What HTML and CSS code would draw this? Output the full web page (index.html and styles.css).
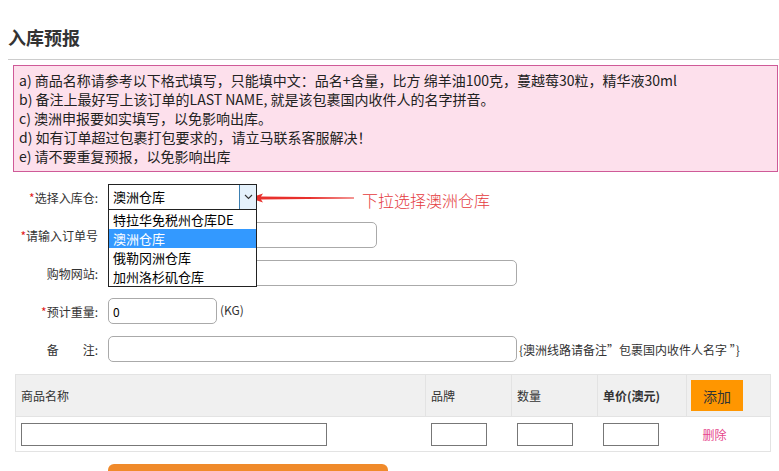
FILE: index.html
```html
<!DOCTYPE html>
<html lang="zh-CN">
<head>
    <meta charset="UTF-8">
    <title>入库预报</title>
    <link rel="stylesheet" href="styles.css">
</head>
<body>
    <div class="page">
        <h1 class="title">入库预报</h1>

        <div class="notice">
            <p>a) 商品名称请参考以下格式填写，只能填中文：品名+含量，比方 绵羊油100克，蔓越莓30粒，精华液30ml</p>
            <p>b) 备注上最好写上该订单的LAST NAME, 就是该包裹国内收件人的名字拼音。</p>
            <p>c) 澳洲申报要如实填写，以免影响出库。</p>
            <p>d) 如有订单超过包裹打包要求的，请立马联系客服解决！</p>
            <p>e) 请不要重复预报，以免影响出库</p>
        </div>

        <div class="form">
            <div class="row">
                <label class="label"><span class="req">*</span>选择入库仓:</label>
                <div class="select-wrap">
                    <div class="select">
                        <span class="select-text">澳洲仓库</span>
                        <span class="select-btn">
                            <svg width="9" height="6" viewBox="0 0 9 6"><path d="M1 1 L4.5 4.5 L8 1" fill="none" stroke="#333" stroke-width="1.1"/></svg>
                        </span>
                    </div>
                    <ul class="dropdown">
                        <li>特拉华免税州仓库DE</li>
                        <li class="active">澳洲仓库</li>
                        <li>俄勒冈洲仓库</li>
                        <li>加州洛杉矶仓库</li>
                    </ul>
                </div>
                <svg class="hint-arrow" width="104" height="10" viewBox="0 0 104 10">
                    <polygon points="0,5 13,0.5 11,3.6 104,4.6 104,5.4 11,6.4 13,9.5" fill="#e8302c"/>
                </svg>
                <span class="hint">下拉选择澳洲仓库</span>
            </div>

            <div class="row">
                <label class="label"><span class="req">*</span>请输入订单号</label>
                <input class="input w-md" type="text">
            </div>

            <div class="row">
                <label class="label">购物网站:</label>
                <input class="input w-lg" type="text">
            </div>

            <div class="row">
                <label class="label"><span class="req">*</span>预计重量:</label>
                <input class="input w-sm" type="text" value="0">
                <span class="unit">(KG)</span>
            </div>

            <div class="row">
                <label class="label">备　　注:</label>
                <input class="input w-lg" type="text">
                <span class="note">{澳洲线路请备注”包裹国内收件人名字 ”}</span>
            </div>
        </div>

        <table class="goods">
            <thead>
                <tr>
                    <th class="c-name">商品名称</th>
                    <th class="c-brand">品牌</th>
                    <th class="c-qty">数量</th>
                    <th class="c-price"><b>单价(澳元)</b></th>
                    <th class="c-op"><button class="btn-add">添加</button></th>
                </tr>
            </thead>
            <tbody>
                <tr>
                    <td><input class="cell-input name" type="text"></td>
                    <td><input class="cell-input" type="text"></td>
                    <td><input class="cell-input" type="text"></td>
                    <td><input class="cell-input" type="text"></td>
                    <td class="c-op"><a class="del" href="#">删除</a></td>
                </tr>
            </tbody>
        </table>

        <button class="submit" title="提交预报"></button>
    </div>
</body>
</html>
```

FILE: styles.css
```css
body {
    margin: 0;
    background-color: #fff;
    font-family: "Noto Sans CJK SC", "Microsoft YaHei", sans-serif;
    color: #333;
    overflow: hidden;
}
.page {
    padding-left: 8px;
}
.title {
    margin: 25px 0 0;
    padding-bottom: 10px;
    font-size: 18px;
    line-height: 24px;
    font-weight: bold;
    color: #333;
    border-bottom: 1px solid #ccc;
}
.notice {
    margin: 5px 1px 0 5px;
    padding: 5px 5px;
    background-color: #fde0ec;
    border: 1px solid #cf5a98;
}
.notice p {
    margin: 0;
    font-size: 14px;
    line-height: 19px;
    color: #222;
}
.form {
    margin-top: 12px;
    display: flex;
    flex-direction: column;
    gap: 12px;
}
.row {
    display: flex;
    align-items: center;
    height: 26px;
}
.label {
    width: 90px;
    margin-right: 10px;
    text-align: right;
    font-size: 12px;
    color: #333;
}
.req {
    color: #e21b1b;
}
.select-wrap {
    position: relative;
}
.select {
    display: flex;
    width: 149px;
    height: 26px;
    box-sizing: border-box;
    border: 1px solid #222;
    background: #fff;
}
.select-text {
    flex: 1;
    padding-left: 4px;
    font-size: 13px;
    line-height: 24px;
    color: #000;
}
.select-btn {
    width: 16px;
    display: flex;
    align-items: center;
    justify-content: center;
    background: #e5f1fb;
    border-left: 1px solid #3c7fb1;
}
.dropdown {
    position: absolute;
    top: 26px;
    left: 0;
    z-index: 5;
    width: 149px;
    box-sizing: border-box;
    margin: 0;
    padding: 0;
    list-style: none;
    background: #fff;
    border: 1px solid #222;
    border-top: none;
}
.dropdown li {
    padding-left: 4px;
    font-size: 13px;
    line-height: 19px;
    color: #000;
}
.dropdown li.active {
    background: #3399ff;
    color: #fff;
}
.hint-arrow {
    margin-left: -7px;
    margin-top: 2px;
}
.hint {
    margin-left: 8px;
    padding-top: 5px;
    font-size: 16px;
    font-weight: 300;
    color: #e4393c;
}
.input {
    height: 26px;
    box-sizing: border-box;
    padding: 0 4px;
    border: 1px solid #aaa;
    border-radius: 5px;
    font-family: inherit;
    font-size: 12px;
    color: #000;
    outline: none;
}
.w-sm {
    width: 109px;
}
.w-md {
    width: 269px;
}
.w-lg {
    width: 409px;
}
.unit {
    margin-left: 3px;
    padding-bottom: 3px;
    font-size: 12px;
    color: #333;
}
.note {
    margin-left: 2px;
    font-size: 12px;
    color: #333;
}
.goods {
    margin: 12px 0 0 7px;
    width: 756px;
    border-collapse: collapse;
    border: 1px solid #e3e3e3;
    font-size: 12px;
}
.goods th {
    height: 41px;
    padding: 0 5px;
    text-align: left;
    font-weight: normal;
    color: #333;
    background: #f0f0f0;
    border-left: 1px solid #e3e3e3;
    border-bottom: 1px solid #e3e3e3;
}
.goods th b {
    font-weight: bold;
}
.goods td {
    height: 34px;
    padding: 0 5px;
}
.c-name {
    width: 399px;
}
.c-brand,
.c-qty {
    width: 75px;
}
.c-price {
    width: 78px;
}
.goods .c-op {
    padding: 0 4px;
}
.btn-add {
    width: 52px;
    height: 31px;
    border: none;
    background: #ff9600;
    font-family: inherit;
    font-size: 14px;
    color: #333;
    cursor: pointer;
}
.cell-input {
    display: block;
    width: 56px;
    height: 23px;
    box-sizing: border-box;
    border: 1px solid #777;
    outline: none;
}
.cell-input.name {
    width: 306px;
}
.del {
    display: block;
    padding-left: 12px;
    font-size: 12px;
    color: #e6468c;
    text-decoration: none;
}
.submit {
    display: block;
    margin: 12px 0 0 100px;
    width: 280px;
    height: 38px;
    border: none;
    border-radius: 6px;
    background: #f08a2a;
    cursor: pointer;
}
```
